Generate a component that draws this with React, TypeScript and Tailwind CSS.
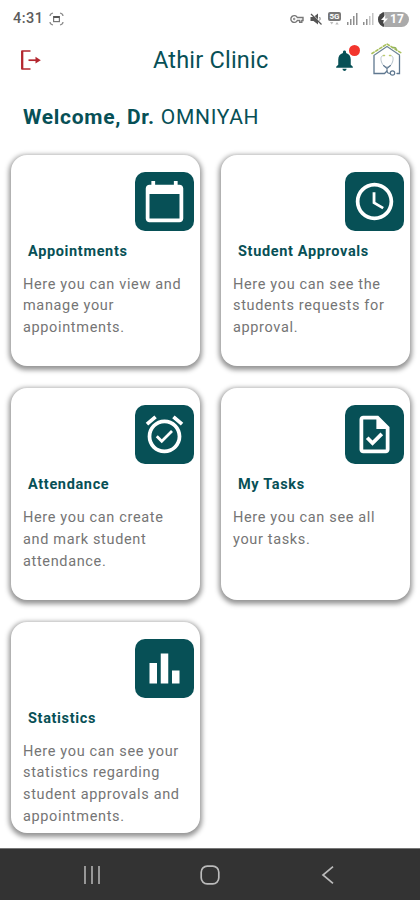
import React from 'react';
import type { IconType } from 'react-icons';
import { MdAccessTime, MdAlarmOn, MdBarChart, MdCalendarToday, MdNotifications, MdOutlineTask } from 'react-icons/md';

type MenuCard = {
  title: string;
  description: string;
  icon: IconType;
};

const cards: MenuCard[] = [
  { title: 'Appointments', description: 'Here you can view and manage your appointments.', icon: MdCalendarToday },
  { title: 'Student Approvals', description: 'Here you can see the students requests for approval.', icon: MdAccessTime },
  { title: 'Attendance', description: 'Here you can create and mark student attendance.', icon: MdAlarmOn },
  { title: 'My Tasks', description: 'Here you can see all your tasks.', icon: MdOutlineTask },
  { title: 'Statistics', description: 'Here you can see your statistics regarding student approvals and appointments.', icon: MdBarChart },
];

const Signal: React.FC<{ bars: number }> = ({ bars }) => (
  <svg width="12" height="12" viewBox="0 0 12 12">
    {[3, 6, 9, 12].map((h, i) => (
      <rect key={h} x={i * 3} y={12 - h} width="1.5" height={h} fill={i < bars ? '#8f8f8f' : '#c4c4c4'} />
    ))}
  </svg>
);

const StatusBar = () => (
  <div className="flex h-[38px] items-center pl-[13px] pr-[11px] text-[#5c5c5c]">
    <span className="w-[32px] text-[14.5px] font-medium leading-none tracking-[0.5px]">4:31</span>
    <svg className="ml-1" width="15" height="14" viewBox="0 0 15 14" fill="none" stroke="#8a8a8a" strokeWidth="1.2">
      <path d="M4 1C2 1.500 1 2.500 1 4M11 1c2 .5 3 1.500 3 3M4 13c-2-.5-3-1.500-3-3M11 13c2-.5 3-1.500 3-3" />
      <rect x="4.600" y="4.600" width="5.800" height="5" stroke="#777" />
      <path d="M4.500 5h6" stroke="#555" strokeWidth="2" />
    </svg>
    <div className="ml-auto flex items-center">
      {/* vpn key */}
      <svg width="14" height="10" viewBox="0 0 14 10" fill="none" stroke="#777" strokeWidth="1.4">
        <path d="M7.300 3.500H13v3h-1.200v1.700H9.700V6.500H7.300A3.400 3.400 0 1 1 7.300 3.500z" />
        <circle cx="4.200" cy="5" r=".8" strokeWidth="1" />
      </svg>
      {/* muted speaker */}
      <svg className="ml-[6px]" width="12" height="12" viewBox="0 0 12 12">
        <path d="M.5 4h3L8 .5v11L3.500 8h-3z" fill="#555" />
        <path d="M9.500 4c.8 1 .8 2.500 0 3.500" stroke="#777" fill="none" />
        <path d="M1.800 .6l10 10" stroke="#fff" strokeWidth="1" />
        <path d="M1 1l10.500 10.500" stroke="#555" strokeWidth="1.200" />
      </svg>
      {/* 5G badge with data arrows */}
      <div className="ml-[6px] flex flex-col items-center">
        <span className="flex h-[9px] w-[13px] items-center justify-center rounded-[2px] bg-[#777] text-[8px] font-bold leading-none text-white">5G</span>
        <svg width="9" height="5" viewBox="0 0 9 5">
          <path d="M0 1h3.400L1.700 3.500z" fill="#bbb" />
          <path d="M5.300 3.500h3.400L7 1z" fill="#bbb" />
        </svg>
      </div>
      <span className="ml-[6px] flex gap-1">
        <Signal bars={4} />
        <Signal bars={2} />
      </span>
      <div className="ml-[3px] flex h-[15px] w-[31px] items-center overflow-hidden rounded-full bg-[#aaa]">
        <div className="flex h-full w-[6px] bg-[#444]" />
        <svg className="-ml-[3px]" width="7" height="9" viewBox="0 0 7 9">
          <path d="M4.500 0L0 5h2.800L2 9l5-5.500H4z" fill="#fff" />
        </svg>
        <span className="ml-[2px] text-[12px] font-bold leading-none text-white">17</span>
      </div>
    </div>
  </div>
);

const ClinicLogo = () => (
  <svg width="32" height="34" viewBox="0 0 32 34" fill="none" strokeLinecap="round">
    <path d="M3 12.500V30.500H13.500L16 28M21.500 30.500H23M26 30.500H28.500V12.500" stroke="#5f7890" strokeWidth="1.300" />
    <path d="M3.500 12L16 3.500L28.500 12" stroke="#6c8596" strokeWidth="1.100" />
    <path d="M1 10.500L16 1L31 10.500" stroke="#a9c05c" strokeWidth="1.600" strokeDasharray="2.500 2" />
    <path d="M22 4.500c2.500-.5 3 .5 3.200 2" stroke="#8fb05c" strokeWidth="1.400" />
    <path d="M12.500 12.500c-3 0-3 3.500-2 6.500 1 3 3 5 5.500 5s4.500-2 5.500-5c1-3 1-6.500-2-6.500" stroke="#b7c3cb" strokeWidth="1" />
    <path d="M12.500 12.500h1M18.500 12.500h1" stroke="#bccb6d" strokeWidth="1.500" />
    <path d="M12.500 22.500L16 25.500L19.500 22.500M16 25v3c0 2 1.500 2.500 3.500 2.500" stroke="#5f7890" strokeWidth="1.100" />
    <circle cx="21.500" cy="30" r="2.200" fill="#fff" stroke="#5f7890" strokeWidth="1.200" />
  </svg>
);

const Header = () => (
  <header className="flex h-[44px] items-center pl-[21px] pr-[17px]">
    <svg width="21" height="20" viewBox="0 0 21 20" fill="none" stroke="#b3262e" strokeWidth="1.700">
      <path d="M9.500 1H1.200v18h8.300" />
      <path d="M1.200 1v18" strokeWidth="2.200" />
      <path d="M7.500 10.200H17" />
      <path d="M14.500 6.800L19.800 10.200L14.500 13.600z" fill="#b3262e" stroke="none" />
    </svg>
    <h1 className="ml-[111px] pt-px text-[23.5px] leading-none tracking-[0.2px]">Athir Clinic</h1>
    <div className="relative ml-auto mr-[14px]">
      <MdNotifications className="size-[25px]" />
      <span className="absolute -top-[3px] right-[-3px] size-[11px] rounded-full bg-[#f3352d]" />
    </div>
    <ClinicLogo />
  </header>
);

const Card: React.FC<{ card: MenuCard }> = ({ card }) => {
  const Icon = card.icon;
  return (
    <div className="h-[211.5px] rounded-[16px] bg-white pt-[17px] shadow-[0_2px_5px_1.5px_rgba(0,0,0,0.42)]">
      <div className="ml-auto mr-[6px] flex size-[59px] items-center justify-center rounded-[10px] bg-[#075056] text-white">
        <Icon className="size-[45px]" />
      </div>
      <h2 className="mt-[11px] pl-[17px] text-[14.5px] font-bold leading-5 tracking-[0.65px]">{card.title}</h2>
      <p className="mt-3 pl-3 pr-3 text-[14.5px] leading-[21.8px] tracking-[0.65px] text-[#757575]">{card.description}</p>
    </div>
  );
};

const NavBar = () => (
  <nav className="mt-auto flex h-[52px] items-center justify-between border-t border-[#777] bg-[#333] pl-[83px] pr-[86px]">
    <svg width="18" height="18" viewBox="0 0 18 18" stroke="#aaa" strokeWidth="1.700">
      <path d="M2 0v18M9 0v18M16 0v18" />
    </svg>
    <svg className="-ml-[3px]" width="20" height="20" viewBox="0 0 20 20" fill="none" stroke="#bbb" strokeWidth="1.700">
      <rect x="1.200" y="1.200" width="17.600" height="17.600" rx="6" />
    </svg>
    <svg width="13" height="18" viewBox="0 0 13 18" fill="none" stroke="#bbb" strokeWidth="1.700">
      <path d="M12 .7L2 9l10 8.300" />
    </svg>
  </nav>
);

export default function App() {
  return (
    <div className="flex h-[900px] w-[420px] flex-col overflow-hidden bg-white font-['Roboto',sans-serif] text-[#075056]">
      <StatusBar />
      <Header />
      <p className="mt-[23px] pl-[23px] text-[21px] leading-6 tracking-[0.7px]">
        <span className="font-bold">Welcome, Dr.</span> OMNIYAH
      </p>
      <main className="mt-[25.5px] grid grid-cols-2 gap-x-[21px] gap-y-[22px] pl-[11px] pr-[10px]">
        {cards.map((card) => (
          <Card key={card.title} card={card} />
        ))}
      </main>
      <NavBar />
    </div>
  );
}
